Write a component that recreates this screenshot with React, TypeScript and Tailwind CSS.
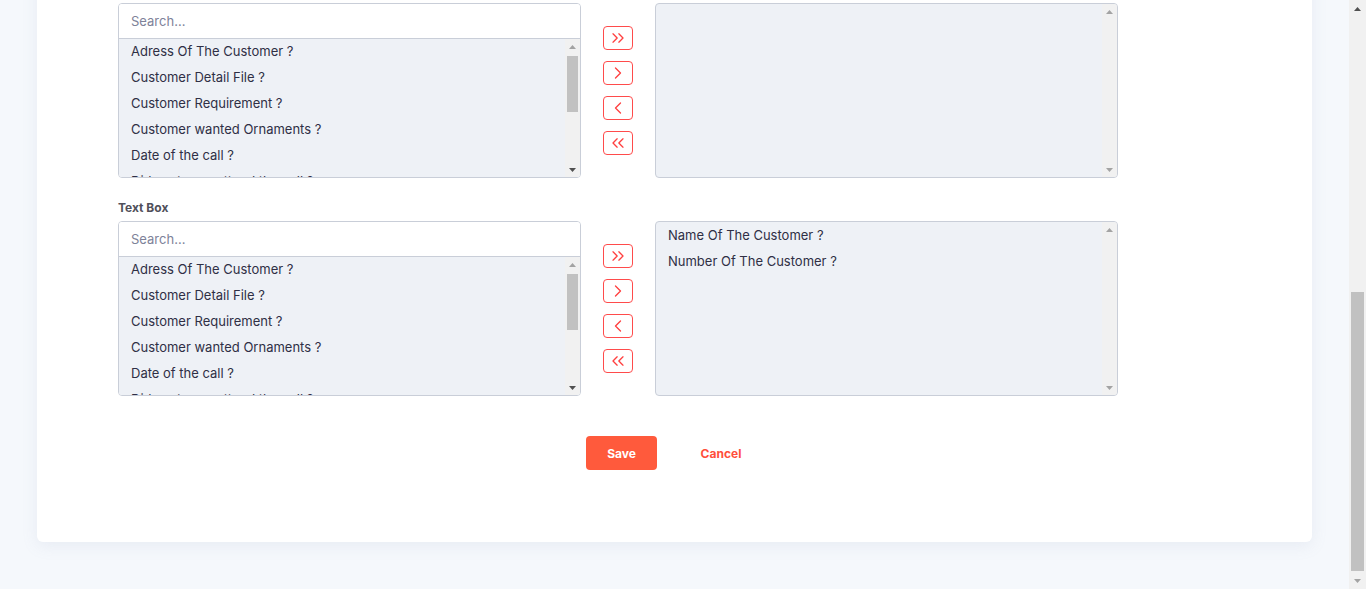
import React, { useLayoutEffect } from 'react';
import { ChevronsRight, ChevronRight, ChevronLeft, ChevronsLeft } from 'lucide-react';

const questions = [
  'Adress Of The Customer ?',
  'Customer Detail File ?',
  'Customer Requirement ?',
  'Customer wanted Ornaments ?',
  'Date of the call ?',
  'Did customer attend the call ?',
  'Email Of The Customer ?',
  'Feedback Of The Customer ?',
];

interface SectionProps {
  label: string;
  available: string[];
  selected: string[];
}

// little triangle used on the scrollbar arrow buttons
function Arrow({ up, dark }: { up?: boolean; dark?: boolean }) {
  return (
    <svg width="7" height="4" viewBox="0 0 7 4">
      <polygon points={up ? '3.5,0 7,4 0,4' : '0,0 7,0 3.5,4'} fill={dark ? '#505050' : '#a3a3a3'} />
    </svg>
  );
}

interface BarProps {
  thumb?: string;
  upDark?: boolean;
  downDark?: boolean;
}

function ScrollBar({ thumb, upDark, downDark }: BarProps) {
  return (
    <div className="w-[15px] h-full shrink-0 flex flex-col bg-[#f1f1f1]">
      <div className="h-[15px] flex items-center justify-center">
        <Arrow up dark={upDark} />
      </div>
      <div className="flex-1 px-[2px] py-[2px]">
        {thumb && <div className={`w-full bg-[#c1c1c1] ${thumb}`} />}
      </div>
      <div className="h-[15px] flex items-center justify-center">
        <Arrow dark={downDark} />
      </div>
    </div>
  );
}

function ListItem({ text }: { text: string }) {
  return (
    <div className="h-[26px] flex items-center px-3 text-[13px] text-[#2f2f45] whitespace-nowrap">
      {text}
    </div>
  );
}

function MoveButton({ icon: Icon }: { icon: React.ComponentType<any> }) {
  return (
    <button className="w-[30px] h-[24px] flex items-center justify-center bg-white border border-[#ff4b4b] rounded-[4px] text-[#ff4040]">
      <Icon size={20} strokeWidth={1.6} />
    </button>
  );
}

function TransferSection({ label, available, selected }: SectionProps) {
  return (
    <div className="mt-[22px] first:mt-0">
      <div className="text-[12px] leading-4 font-bold text-[#50505a] mb-[5px]">{label}</div>
      <div className="flex items-center">
        <div className="w-[463px] h-[175px] flex flex-col border border-[#c9ced8] rounded-[4px] overflow-hidden">
          <input
            className="h-[35px] shrink-0 px-3 text-[13px] bg-white border-b border-[#c9ced8] outline-none placeholder:text-[#7e8299]"
            placeholder="Search..."
          />
          <div className="flex-1 min-h-0 flex bg-[#eef1f6]">
            <div className="flex-1 overflow-hidden">
              {available.map((q) => (
                <ListItem key={q} text={q} />
              ))}
            </div>
            <ScrollBar thumb="h-[56px]" downDark />
          </div>
        </div>
        <div className="flex flex-col gap-[11px] mx-[22px]">
          <MoveButton icon={ChevronsRight} />
          <MoveButton icon={ChevronRight} />
          <MoveButton icon={ChevronLeft} />
          <MoveButton icon={ChevronsLeft} />
        </div>
        <div className="w-[463px] h-[175px] flex border border-[#c9ced8] rounded-[4px] bg-[#eef1f6] overflow-hidden">
          <div className="flex-1 pt-px">
            {selected.map((q) => (
              <ListItem key={q} text={q} />
            ))}
          </div>
          <div className="h-full bg-[#f0f0f0]">
            <ScrollBar />
          </div>
        </div>
      </div>
    </div>
  );
}

export default function App() {
  useLayoutEffect(() => {
    window.scrollTo(0, document.documentElement.scrollHeight);
  }, []);

  return (
    <div className="min-h-screen bg-[#f5f8fc] pl-[37px] pr-[54px] pt-6 pb-[47px] font-['Inter',sans-serif]">
      <div className="bg-white rounded-[6px] shadow-[0_4px_16px_rgba(140,150,180,0.12)] pt-[30px] pb-[72px]">
        <div className="pl-[81px] h-[40px] flex items-center text-[16px] font-semibold text-[#181c32] mb-[35px]">
          Add Form
        </div>
        <div className="pl-[81px]">
          <TransferSection label="Dropdown" available={questions} selected={[]} />
          <TransferSection label="Radio Button" available={questions} selected={[]} />
          <TransferSection label="Check Box" available={questions} selected={[]} />
          <TransferSection
            label="Text Box"
            available={questions}
            selected={['Name Of The Customer ?', 'Number Of The Customer ?']}
          />
        </div>
        <div className="flex justify-center gap-[22px] mt-10">
          <button className="w-[71px] h-[34px] pt-px rounded-[4px] bg-[#ff5a3c] text-white text-[12px] font-bold">
            Save
          </button>
          <button className="w-[84px] h-[34px] pt-px text-[#ff4f3b] text-[12px] font-bold">Cancel</button>
        </div>
      </div>
      <div className="fixed top-0 right-0 w-[17px] h-screen">
        <div className="w-[17px] h-full flex flex-col bg-[#f1f1f1]">
          <div className="h-[17px] flex items-center justify-center">
            <Arrow up dark />
          </div>
          <div className="flex-1 flex flex-col justify-end px-[2px] pb-[1px]">
            <div className="w-full h-[279px] bg-[#c1c1c1]" />
          </div>
          <div className="h-[17px] flex items-center justify-center">
            <Arrow />
          </div>
        </div>
      </div>
    </div>
  );
}
